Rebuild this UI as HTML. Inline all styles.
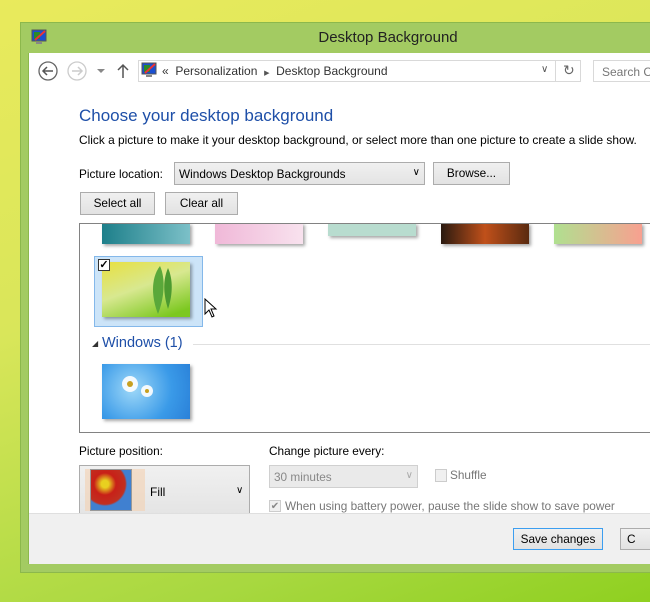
<!DOCTYPE html>
<html><head><style>
*{margin:0;padding:0;box-sizing:border-box}
body{width:650px;height:602px;overflow:hidden;position:relative;font-family:"Liberation Sans",sans-serif;font-size:12px;color:#000;
background:linear-gradient(160deg,#e9ea5c 0%,#d9e65a 40%,#a8d840 80%,#8fd020 100%);}
.a{position:absolute}
.btn{position:absolute;background:linear-gradient(#f0f0f0,#e2e2e2);border:1px solid #acacac;text-align:center;line-height:20px;font-size:11.8px}
.th{position:absolute;box-shadow:2px 2px 3px rgba(0,0,0,.35)}
</style></head><body>
<div class="a" style="left:20px;top:22px;width:640px;height:551px;background:#a3cb62;border:1px solid #8cb84c"></div>
<div class="a" style="left:0;top:22px;width:650px;text-align:center;font-size:15px;line-height:32px;color:#222;padding-left:126px">Desktop Background</div>
<svg class="a" style="left:31px;top:29px" width="18" height="18"><rect x="1" y="1" width="14" height="11" fill="#1a4fd0" stroke="#555"/><rect x="3" y="3" width="6" height="7" fill="#2a8a2a"/><path d="M4 11 L14 2" stroke="#e33" stroke-width="2"/><rect x="5" y="13" width="6" height="2" fill="#888"/></svg>
<div class="a" style="left:28px;top:53px;width:622px;height:511px;background:#fff;border-left:1px solid #8cb84c"></div>
<svg class="a" style="left:37px;top:60px" width="100" height="22">
<circle cx="11" cy="11" r="9" fill="none" stroke="#666" stroke-width="1.3"/><path d="M16 11H6M10 7L6 11L10 15" fill="none" stroke="#555" stroke-width="1.5"/>
<circle cx="40" cy="11" r="9" fill="none" stroke="#ccc" stroke-width="1.3"/><path d="M35 11H45M41 7L45 11L41 15" fill="none" stroke="#ccc" stroke-width="1.5"/>
<path d="M60 9L68 9L64 13Z" fill="#888"/>
<path d="M86 18V5M81 10L86 5L91 10" fill="none" stroke="#555" stroke-width="1.5"/>
</svg>
<div class="a" style="left:138px;top:60px;width:443px;height:22px;border:1px solid #d9d9d9"></div>
<div class="a" style="left:555px;top:61px;width:1px;height:20px;background:#d9d9d9"></div>
<svg class="a" style="left:141px;top:62px" width="18" height="18"><rect x="1" y="1" width="14" height="11" fill="#1a4fd0" stroke="#555"/><rect x="3" y="3" width="6" height="7" fill="#2a8a2a"/><path d="M4 11 L14 2" stroke="#e33" stroke-width="2"/><rect x="5" y="13" width="6" height="2" fill="#888"/></svg>
<div class="a" style="left:162px;top:64px;font-size:12px;color:#333;white-space:nowrap">«&nbsp; Personalization &nbsp;<span style="font-size:7px;color:#555">▶</span>&nbsp; Desktop Background</div>
<div class="a" style="left:541px;top:64px;font-size:10px;color:#555">∨</div>
<div class="a" style="left:563px;top:62px;font-size:14px;color:#666">↻</div>
<div class="a" style="left:593px;top:60px;width:60px;height:22px;border:1px solid #d9d9d9;padding:4px 0 0 8px;color:#777;font-size:12px;white-space:nowrap">Search C</div>
<div class="a" style="left:79px;top:106px;font-size:17px;color:#1e4fa8">Choose your desktop background</div>
<div class="a" style="left:79px;top:133px;font-size:11.9px;white-space:nowrap">Click a picture to make it your desktop background, or select more than one picture to create a slide show.</div>
<div class="a" style="left:79px;top:167px;font-size:11.8px">Picture location:</div>
<div class="a" style="left:174px;top:162px;width:251px;height:23px;border:1px solid #acacac;background:linear-gradient(#f0f0f0,#e4e4e4);padding:4px 0 0 4px;font-size:11.8px">Windows Desktop Backgrounds<span style="position:absolute;right:4px;top:4px;font-size:10px">∨</span></div>
<div class="btn" style="left:433px;top:162px;width:77px;height:23px">Browse...</div>
<div class="btn" style="left:80px;top:192px;width:75px;height:23px">Select all</div>
<div class="btn" style="left:165px;top:192px;width:73px;height:23px">Clear all</div>
<div class="a" style="left:79px;top:223px;width:580px;height:210px;border:1px solid #828282;background:#fff;overflow:hidden">
<div class="th" style="left:22px;top:-1px;width:88px;height:21px;background:linear-gradient(90deg,#1d7f8a,#7cc0c8)"></div>
<div class="th" style="left:135px;top:-1px;width:88px;height:21px;background:linear-gradient(90deg,#f0b8d8,#f8e2ee)"></div>
<div class="th" style="left:248px;top:-1px;width:88px;height:13px;background:#b8dccf"></div>
<div class="th" style="left:361px;top:-1px;width:88px;height:21px;background:linear-gradient(90deg,#2a1a10,#c0501a,#5a2a10)"></div>
<div class="th" style="left:474px;top:-1px;width:88px;height:21px;background:linear-gradient(90deg,#b0e090,#f8a090)"></div>
<div class="a" style="left:14px;top:32px;width:109px;height:71px;background:#cce4f8;border:1px solid #84b8ea"></div>
<div class="th" style="left:22px;top:38px;width:88px;height:55px;background:linear-gradient(160deg,#e8e040,#d8e890 45%,#7cc820 90%)"></div>
<svg class="a" style="left:60px;top:40px" width="40" height="52"><path d="M20 2C10 15 12 35 18 50C24 35 26 15 20 2Z" fill="#5aa83a"/><path d="M28 4C22 18 24 32 28 45C33 30 33 15 28 4Z" fill="#4c9a30"/></svg>
<div class="a" style="left:18px;top:35px;width:12px;height:12px;border:1px solid #333;background:#fff;font-size:11px;line-height:10px;text-align:center;font-weight:bold">✓</div>
<svg class="a" style="left:124px;top:74px" width="14" height="22"><path d="M1 1V16L5 12L8 19L10 18L7 11H12Z" fill="#fff" stroke="#000"/></svg>
<div class="a" style="left:12px;top:115px;font-size:8px;color:#333">◢</div>
<div class="a" style="left:22px;top:111px;font-size:14.5px;color:#1e4fa8">Windows (1)</div>
<div class="a" style="left:113px;top:120px;width:480px;height:1px;background:#e0e0e0"></div>
<div class="th" style="left:22px;top:140px;width:88px;height:55px;background:radial-gradient(circle at 35% 45%,#9ed8f8,#3a9ae8 60%,#2a80d8)"></div>
<svg class="a" style="left:40px;top:146px" width="50" height="45"><g fill="#fff"><circle cx="10" cy="14" r="8" opacity=".9"/><circle cx="27" cy="21" r="6" opacity=".9"/></g><circle cx="10" cy="14" r="3" fill="#c8a020"/><circle cx="27" cy="21" r="2" fill="#c8a020"/></svg>
</div>
<div class="a" style="left:79px;top:444px;font-size:11.8px">Picture position:</div>
<div class="a" style="left:79px;top:465px;width:171px;height:50px;border:1px solid #acacac;border-bottom:none;background:linear-gradient(#f0f0f0,#e4e4e4)"></div>
<div class="a" style="left:85px;top:469px;width:60px;height:42px;background:#f4d0b0;opacity:.6"></div>
<div class="a" style="left:90px;top:469px;width:42px;height:42px;border:1px solid #999;background:radial-gradient(circle at 35% 35%,#e8d020 10%,#c82018 30%,#c03020 55%,#4080d0 60%);"></div>
<div class="a" style="left:150px;top:485px;font-size:12px">Fill</div>
<div class="a" style="left:236px;top:485px;font-size:10px">∨</div>
<div class="a" style="left:269px;top:444px;font-size:11.8px">Change picture every:</div>
<div class="a" style="left:269px;top:465px;width:149px;height:23px;border:1px solid #d0d0d0;background:#eaeaea;color:#888;padding:4px 0 0 4px;font-size:11.8px">30 minutes<span style="position:absolute;right:4px;top:4px;font-size:10px;color:#aaa">∨</span></div>
<div class="a" style="left:435px;top:469px;width:12px;height:13px;border:1px solid #ccc;background:#f0f0f0"></div>
<div class="a" style="left:450px;top:468px;color:#777;font-size:11.8px">Shuffle</div>
<div class="a" style="left:269px;top:500px;width:12px;height:12px;border:1px solid #ccc;background:#f0f0f0;color:#888;font-size:10px;line-height:11px;text-align:center">✔</div>
<div class="a" style="left:285px;top:499px;color:#777;font-size:11.8px;white-space:nowrap">When using battery power, pause the slide show to save power</div>
<div class="a" style="left:29px;top:513px;width:621px;height:51px;background:#f0f0f0;border-top:1px solid #dfdfdf"></div>
<div class="btn" style="left:513px;top:528px;width:90px;height:22px;border-color:#3c9ef0;line-height:20px">Save changes</div>
<div class="btn" style="left:620px;top:528px;width:40px;height:22px;text-align:left;padding-left:6px">C</div>
</body></html>
